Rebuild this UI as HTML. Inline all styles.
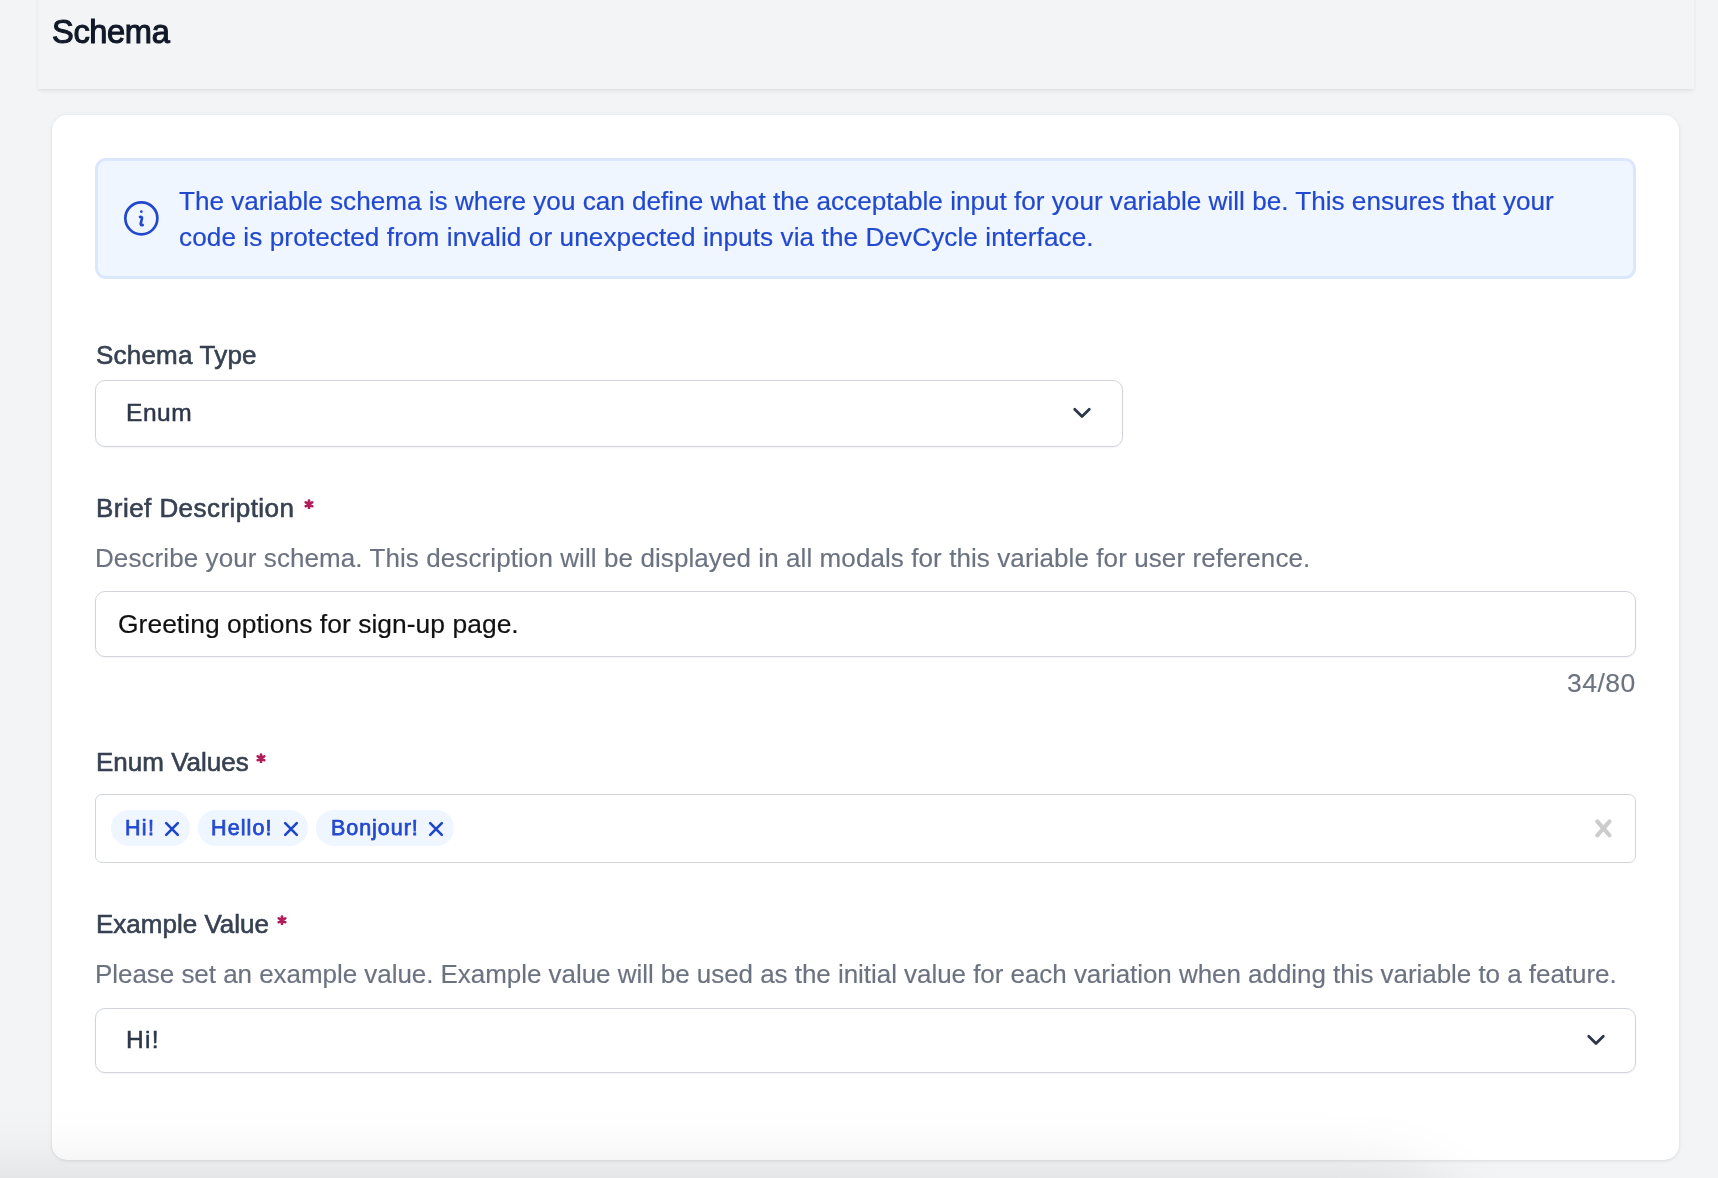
<!DOCTYPE html>
<html>
<head>
<meta charset="utf-8">
<style>
html,body{margin:0;padding:0;}
body{width:1718px;height:1178px;overflow:hidden;background:#f3f4f6;position:relative;font-family:"Liberation Sans",sans-serif;}
.abs{position:absolute;}
.t{position:absolute;white-space:nowrap;line-height:36px;will-change:transform;}
#header{left:37.5px;top:-10px;width:1656.5px;height:99px;background:#f3f4f6;box-shadow:0 3px 5px -1px rgba(0,0,0,0.05),0 1px 3px rgba(0,0,0,0.05);}
#title{left:52px;top:13.8px;font-size:32.6px;color:#111827;-webkit-text-stroke:1.1px #111827;letter-spacing:-0.35px;}
#card{left:52px;top:115px;width:1627px;height:1045px;background:#fff;border-radius:15px;box-shadow:0 1px 3px rgba(0,0,0,0.08),0 0 6px rgba(0,0,0,0.045);}
#info{left:95px;top:158px;width:1541px;height:120.5px;box-sizing:border-box;background:#eff6ff;border:3px solid #dbe7fc;border-radius:11px;}
.info-t{font-size:26.13px;color:#2248cf;-webkit-text-stroke:0.2px #2248cf;left:178.6px;}
.label{font-size:26px;color:#374151;-webkit-text-stroke:0.6px #374151;left:96px;}
.help{font-size:26px;color:#6b7280;-webkit-text-stroke:0.15px #6b7280;left:96px;}
.box{position:absolute;box-sizing:border-box;background:#fff;border:1.3px solid #d1d5db;border-radius:10px;box-shadow:0 1px 2px rgba(0,0,0,0.05);}
.ast{position:absolute;}
.chip{position:absolute;top:810px;height:36px;border-radius:18px;background:#eff6ff;}
.chip-t{font-size:21.5px;color:#2449d0;-webkit-text-stroke:0.75px #2449d0;}
</style>
</head>
<body>
<div id="header" class="abs"></div>
<div id="title" class="t">Schema</div>

<div id="card" class="abs"></div>

<div id="info" class="abs"></div>
<svg class="abs" style="left:120.2px;top:197.1px" width="42.7" height="42.7" viewBox="0 0 24 24" fill="none" stroke="#2248cf" stroke-width="1.5" stroke-linecap="round" stroke-linejoin="round"><path d="m11.25 11.25.041-.02a.75.75 0 0 1 1.063.852l-.708 2.836a.75.75 0 0 0 1.063.853l.041-.021M21 12a9 9 0 1 1-18 0 9 9 0 0 1 18 0Zm-9-3.75h.008v.008H12V8.25Z"/></svg>
<div class="t info-t" style="top:183px">The variable schema is where you can define what the acceptable input for your variable will be. This ensures that your</div>
<div class="t info-t" style="top:219px;letter-spacing:0.09px">code is protected from invalid or unexpected inputs via the DevCycle interface.</div>

<div class="t label" style="top:337px;left:95.5px;letter-spacing:0.2px">Schema Type</div>
<div class="box" style="left:95px;top:380px;width:1028px;height:67px;"></div>
<div class="t" style="left:125.5px;top:395px;font-size:24.5px;color:#2d3748;-webkit-text-stroke:0.5px #2d3748;letter-spacing:0.55px">Enum</div>
<svg class="abs" style="left:1072px;top:406px" width="20" height="14" viewBox="0 0 20 14" fill="none" stroke="#2d3748" stroke-width="2.8" stroke-linecap="round" stroke-linejoin="round"><path d="M2.7 3.2l7.3 7.3 7.3-7.3"/></svg>

<div class="t label" style="top:490px;letter-spacing:0.45px">Brief Description</div>
<svg class="ast" style="left:303.5px;top:498.5px" width="10" height="10.5" viewBox="0 0 10 10.5"><g stroke="#b01f5a" stroke-width="2.7" stroke-linecap="round"><path d="M5 1.5v7.5M1.8 3.3l6.4 3.9M8.2 3.3l-6.4 3.9"/></g><circle cx="5" cy="5.25" r="2.3" fill="#b01f5a"/></svg>
<div class="t help" style="top:539.5px;left:94.8px;letter-spacing:0.085px">Describe your schema. This description will be displayed in all modals for this variable for user reference.</div>

<div class="box" style="left:95px;top:591px;width:1541px;height:66px;"></div>
<div class="t" style="left:117.7px;top:605.5px;font-size:26.4px;letter-spacing:0.05px;color:#111111;-webkit-text-stroke:0.2px #111111;">Greeting options for sign-up page.</div>
<div class="t help" style="left:auto;right:82.5px;top:665px;font-size:26.5px;letter-spacing:0.5px;">34/80</div>

<div class="t label" style="top:744px">Enum Values</div>
<svg class="ast" style="left:256px;top:752.5px" width="10" height="10.5" viewBox="0 0 10 10.5"><g stroke="#b01f5a" stroke-width="2.7" stroke-linecap="round"><path d="M5 1.5v7.5M1.8 3.3l6.4 3.9M8.2 3.3l-6.4 3.9"/></g><circle cx="5" cy="5.25" r="2.3" fill="#b01f5a"/></svg>

<div class="box" style="left:95px;top:794px;width:1541px;height:68.5px;border-radius:7px;box-shadow:none;"></div>
<div class="chip" style="left:111px;width:79px;"></div>
<div class="t chip-t" style="left:125.3px;top:810.4px;letter-spacing:1.3px;">Hi!</div>
<svg class="abs" style="left:164px;top:821px" width="16" height="16" viewBox="0 0 16 16" fill="none" stroke="#1d46cc" stroke-width="2.6" stroke-linecap="round"><path d="M2.2 2.2l11.6 11.6M13.8 2.2L2.2 13.8"/></svg>
<div class="chip" style="left:197.5px;width:110.5px;"></div>
<div class="t chip-t" style="left:211.3px;top:810.4px;letter-spacing:1.1px;">Hello!</div>
<svg class="abs" style="left:282.5px;top:821px" width="16" height="16" viewBox="0 0 16 16" fill="none" stroke="#1d46cc" stroke-width="2.6" stroke-linecap="round"><path d="M2.2 2.2l11.6 11.6M13.8 2.2L2.2 13.8"/></svg>
<div class="chip" style="left:316px;width:138px;"></div>
<div class="t chip-t" style="left:330.5px;top:810.4px;letter-spacing:0.95px;">Bonjour!</div>
<svg class="abs" style="left:427.5px;top:821px" width="16" height="16" viewBox="0 0 16 16" fill="none" stroke="#1d46cc" stroke-width="2.6" stroke-linecap="round"><path d="M2.2 2.2l11.6 11.6M13.8 2.2L2.2 13.8"/></svg>
<svg class="abs" style="left:1585.9px;top:810.6px" width="34.8" height="34.8" viewBox="0 0 20 20" fill="#cccccc"><path d="M14.348 14.849c-0.469 0.469-1.229 0.469-1.697 0l-2.651-3.030-2.651 3.029c-0.469 0.469-1.229 0.469-1.697 0-0.469-0.469-0.469-1.229 0-1.697l2.758-3.15-2.759-3.152c-0.469-0.469-0.469-1.228 0-1.697s1.228-0.469 1.697 0l2.652 3.031 2.651-3.031c0.469-0.469 1.228-0.469 1.697 0s0.469 1.229 0 1.697l-2.758 3.152 2.758 3.15c0.469 0.469 0.469 1.229 0 1.698z"/></svg>

<div class="t label" style="top:906px">Example Value</div>
<svg class="ast" style="left:276.7px;top:914.5px" width="10" height="10.5" viewBox="0 0 10 10.5"><g stroke="#b01f5a" stroke-width="2.7" stroke-linecap="round"><path d="M5 1.5v7.5M1.8 3.3l6.4 3.9M8.2 3.3l-6.4 3.9"/></g><circle cx="5" cy="5.25" r="2.3" fill="#b01f5a"/></svg>
<div class="t help" style="top:956px;left:94.8px;letter-spacing:-0.045px">Please set an example value. Example value will be used as the initial value for each variation when adding this variable to a feature.</div>

<div class="box" style="left:95px;top:1007.5px;width:1541px;height:65.5px;"></div>
<div class="t" style="left:125.5px;top:1021.5px;font-size:24.5px;color:#2d3748;-webkit-text-stroke:0.5px #2d3748;letter-spacing:1.3px">Hi!</div>
<svg class="abs" style="left:1586px;top:1033px" width="20" height="14" viewBox="0 0 20 14" fill="none" stroke="#2d3748" stroke-width="2.8" stroke-linecap="round" stroke-linejoin="round"><path d="M2.7 3.2l7.3 7.3 7.3-7.3"/></svg>

<div class="abs" style="left:-300px;top:1186px;width:1770px;height:200px;border-radius:120px;background:#000;box-shadow:0 0 70px 12px rgba(0,0,0,0.10);pointer-events:none;"></div>
</body>
</html>
